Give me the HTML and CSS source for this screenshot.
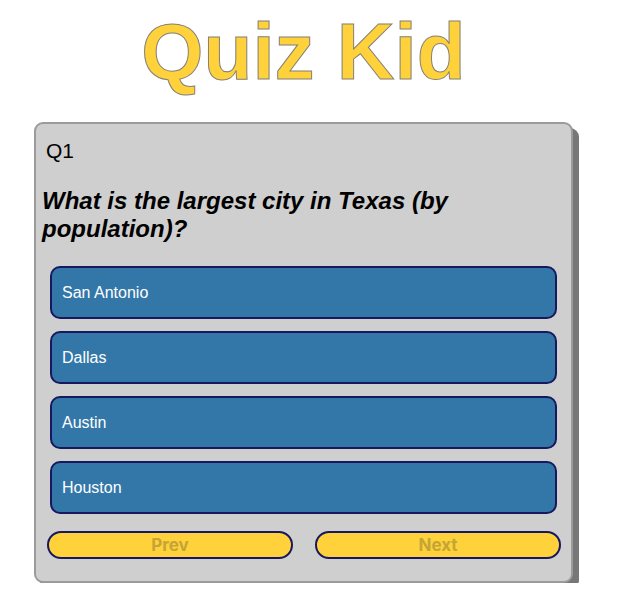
FILE: index.html
```html
<!DOCTYPE html>
<html lang="en">
<head>
<meta charset="utf-8">
<title>Quiz Kid</title>
<link rel="stylesheet" href="styles.css">
</head>
<body>
<main class="app">
  <h1 class="title">Quiz Kid</h1>
  <section class="card">
    <div class="qnum">Q1</div>
    <h2 class="question">What is the largest city in Texas (by population)?</h2>
    <ul class="answers">
      <li><button class="answer">San Antonio</button></li>
      <li><button class="answer">Dallas</button></li>
      <li><button class="answer">Austin</button></li>
      <li><button class="answer">Houston</button></li>
    </ul>
    <div class="nav">
      <button class="nav-btn" disabled>Prev</button>
      <button class="nav-btn" disabled>Next</button>
    </div>
  </section>
</main>
</body>
</html>
```

FILE: styles.css
```css
html, body {
  margin: 0;
  padding: 0;
  background: #ffffff;
}

body {
  font-family: "Liberation Sans", Arial, sans-serif;
  color: #000;
}

.app {
  width: 539px;
  margin-left: 34px;
}

.title {
  margin: 6px 0 0;
  text-align: center;
  font-family: "Liberation Sans", Arial, sans-serif;
  font-weight: 700;
  font-size: 80px;
  line-height: 92px;
  color: #ffd23c;
  -webkit-text-stroke: 1px #858077;
}

.card {
  margin-top: 24px;
  box-sizing: border-box;
  width: 539px;
  background: #cfcfcf;
  border: 2px solid #9b9b9b;
  border-radius: 9px;
  box-shadow: 6px 6px 0 #777777;
  padding: 15px 6px 22px;
}

.qnum {
  padding-left: 4px;
  font-size: 21px;
  line-height: 23px;
}

.question {
  margin: 25px 0 0;
  font-size: 24px;
  line-height: 28px;
  font-weight: 700;
  font-style: italic;
}

.answers {
  list-style: none;
  margin: 23px 8px 0;
  padding: 0;
  display: flex;
  flex-direction: column;
  gap: 12px;
}

.answer {
  display: block;
  box-sizing: border-box;
  width: 100%;
  height: 53px;
  margin: 0;
  padding: 0 0 0 10px;
  text-align: left;
  background: #3377a9;
  border: 2px solid #17185f;
  border-radius: 10px;
  color: #ffffff;
  font-family: "Liberation Sans", Arial, sans-serif;
  font-size: 16px;
}

.nav {
  margin: 17px 4px 0 5px;
  display: grid;
  grid-template-columns: 1fr 1fr;
  gap: 22px;
}

.nav-btn {
  box-sizing: border-box;
  height: 28px;
  margin: 0;
  padding: 0;
  background: #ffd23c;
  border: 2px solid #17185f;
  border-radius: 14px;
  color: #c4a535;
  font-family: Inter, "Noto Sans", sans-serif;
  font-weight: 700;
  font-size: 17px;
  line-height: 24px;
}
```
